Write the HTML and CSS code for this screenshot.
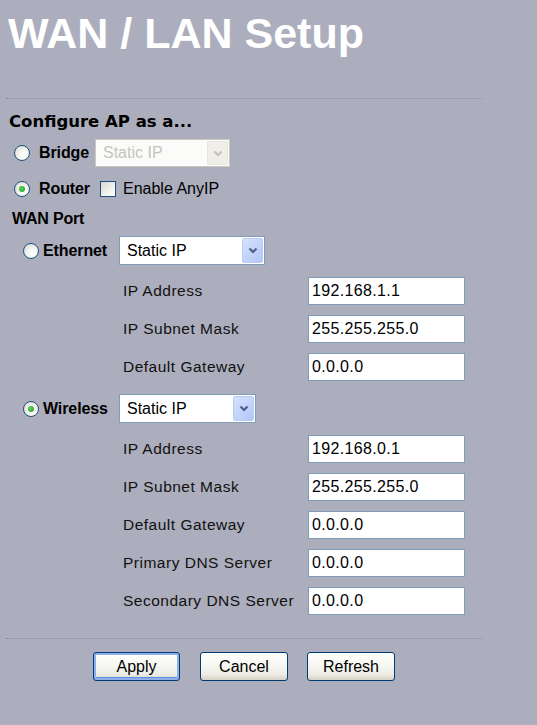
FILE: index.html
```html
<!DOCTYPE html>
<html>
<head>
<meta charset="utf-8">
<link rel="stylesheet" href="styles.css">
</head>
<body>
<h1 class="title">WAN / LAN Setup</h1>
<div class="rule rule-top"></div>
<div class="section-head">Configure AP as a...</div>

<div class="row row-bridge">
  <span class="radio"></span>
  <span class="opt-label bridge-label">Bridge</span>
  <div class="combo combo-disabled combo-bridge">
    <span class="combo-value">Static IP</span>
    <span class="combo-btn"><svg width="10" height="7" viewBox="0 0 10 7"><polyline points="1.5,1.5 5,5 8.5,1.5" fill="none" stroke="#c2c1b8" stroke-width="2.2"/></svg></span>
  </div>
</div>

<div class="row row-router">
  <span class="radio checked"></span>
  <span class="opt-label router-label">Router</span>
  <span class="checkbox"></span>
  <span class="check-text">Enable AnyIP</span>
</div>

<div class="sub-head">WAN Port</div>

<div class="row row-wan">
  <span class="radio"></span>
  <span class="opt-label wan-label">Ethernet</span>
  <div class="combo combo-eth">
    <span class="combo-value">Static IP</span>
    <span class="combo-btn"><svg width="10" height="7" viewBox="0 0 10 7"><polyline points="1.5,1.5 5,5 8.5,1.5" fill="none" stroke="#4d6185" stroke-width="2.2"/></svg></span>
  </div>
</div>

<div class="fields">
  <div class="field"><span class="field-label">IP Address</span><span class="input">192.168.1.1</span></div>
  <div class="field"><span class="field-label">IP Subnet Mask</span><span class="input">255.255.255.0</span></div>
  <div class="field"><span class="field-label">Default Gateway</span><span class="input">0.0.0.0</span></div>
</div>

<div class="row row-wan row-wireless">
  <span class="radio checked"></span>
  <span class="opt-label wan-label">Wireless</span>
  <div class="combo combo-wl">
    <span class="combo-value">Static IP</span>
    <span class="combo-btn"><svg width="10" height="7" viewBox="0 0 10 7"><polyline points="1.5,1.5 5,5 8.5,1.5" fill="none" stroke="#4d6185" stroke-width="2.2"/></svg></span>
  </div>
</div>

<div class="fields">
  <div class="field"><span class="field-label">IP Address</span><span class="input">192.168.0.1</span></div>
  <div class="field"><span class="field-label">IP Subnet Mask</span><span class="input">255.255.255.0</span></div>
  <div class="field"><span class="field-label">Default Gateway</span><span class="input">0.0.0.0</span></div>
  <div class="field"><span class="field-label">Primary DNS Server</span><span class="input">0.0.0.0</span></div>
  <div class="field"><span class="field-label">Secondary DNS Server</span><span class="input">0.0.0.0</span></div>
</div>

<div class="rule rule-bottom"></div>

<div class="buttons">
  <button class="btn btn-default">Apply</button>
  <button class="btn">Cancel</button>
  <button class="btn">Refresh</button>
</div>
</body>
</html>
```

FILE: styles.css
```css
html, body {
  margin: 0;
  padding: 0;
  background: #acaebd;
}
body {
  width: 537px;
  height: 725px;
  overflow: hidden;
  font-family: "Liberation Sans", Arial, sans-serif;
  font-size: 16px;
  color: #000;
}
.title {
  margin: 0;
  padding: 9px 0 0 8px;
  height: 48px;
  font-family: "Liberation Sans", Arial, sans-serif;
  font-weight: bold;
  font-size: 43px;
  line-height: 48px;
  color: #fff;
}
.rule {
  margin-left: 6px;
  width: 476px;
  height: 0;
  border-top: 1px dotted #8a8c99;
}
.rule-top { margin-top: 41px; }
.rule-bottom { margin-top: 23px; }

.section-head {
  margin-top: 13px;
  padding-left: 9px;
  height: 20px;
  line-height: 20px;
  font-family: "DejaVu Sans", Verdana, sans-serif;
  font-weight: bold;
  font-size: 16.5px;
}
.row {
  display: flex;
  align-items: center;
}
.row-bridge { margin-top: 7px; height: 28px; padding-left: 14px; }
.row-router { margin-top: 8px; height: 28px; padding-left: 14px; }
.row-wan { margin-top: 8px; height: 29px; padding-left: 23px; }
.row-wireless { margin-top: 13px; }

.radio {
  flex: none;
  box-sizing: border-box;
  width: 16px;
  height: 16px;
  border: 1px solid #1c5180;
  border-radius: 50%;
  background: radial-gradient(circle at 65% 65%, #ffffff 0%, #f4f4f0 40%, #d4d4cc 100%);
  display: flex;
  align-items: center;
  justify-content: center;
}
.radio.checked::after {
  content: "";
  width: 6px;
  height: 6px;
  border-radius: 50%;
  background: radial-gradient(circle at 40% 40%, #5fd05f, #1e9a1e);
}
.opt-label {
  font-weight: bold;
  font-size: 16px;
  letter-spacing: -0.1px;
}
.bridge-label { margin-left: 9px; width: 56px; }
.router-label { margin-left: 9px; width: 61px; }
.wan-label { margin-left: 4px; width: 76px; }

.checkbox {
  flex: none;
  box-sizing: border-box;
  width: 16px;
  height: 16px;
  border: 1px solid #1c5180;
  background: linear-gradient(135deg, #d8d8d2 0%, #f2f2ee 60%, #ffffff 100%);
}
.check-text { margin-left: 7px; }

.sub-head {
  margin-top: 7px;
  padding-left: 12px;
  height: 18px;
  line-height: 18px;
  font-weight: bold;
  font-size: 16px;
  letter-spacing: -0.2px;
}

.combo {
  flex: none;
  box-sizing: border-box;
  height: 29px;
  border: 1px solid #7f9db9;
  background: #fff;
  display: flex;
  align-items: center;
  padding: 1px;
}
.combo-bridge { width: 135px; height: 28px; }
.combo-eth { width: 146px; }
.combo-wl { width: 137px; }
.combo-value {
  flex: 1;
  padding-left: 6px;
  font-size: 16px;
}
.combo-btn {
  box-sizing: border-box;
  width: 21px;
  height: 100%;
  border: 1px solid #b9cbf3;
  border-radius: 2px;
  background: linear-gradient(135deg, #d6e2fd 0%, #c0d2fb 60%, #b2c7f7 100%);
  display: flex;
  align-items: center;
  justify-content: center;
}
.combo-disabled {
  border-color: #cbc8bd;
  background: #fbfbf9;
}
.combo-disabled .combo-value { color: #c5c4c0; }
.combo-disabled .combo-btn {
  border-color: #e6e5df;
  background: #efeee8;
}

.fields {
  margin-top: 12px;
  padding-left: 123px;
  display: flex;
  flex-direction: column;
  gap: 10px;
}
.field {
  display: flex;
  align-items: center;
  height: 28px;
}
.field-label {
  width: 185px;
  font-size: 15.5px;
  letter-spacing: 0.5px;
  color: #111;
}
.input {
  box-sizing: border-box;
  width: 157px;
  height: 28px;
  border: 1px solid #7f9db9;
  background: #fff;
  padding-left: 3px;
  line-height: 26px;
  font-size: 16px;
  letter-spacing: 0.35px;
}

.buttons {
  margin-top: 13px;
  padding-left: 93px;
  display: flex;
  gap: 19px;
}
.btn {
  box-sizing: border-box;
  width: 88px;
  height: 29px;
  margin: 0;
  padding: 0;
  border: 1px solid #003c74;
  border-radius: 3px;
  background: linear-gradient(180deg, #ffffff 0%, #f6f6f2 50%, #ecebe4 80%, #d6d0c5 100%);
  font-family: "Liberation Sans", Arial, sans-serif;
  font-size: 16px;
  color: #000;
}
.btn-default {
  width: 87px;
  margin-right: 1px;
  box-shadow: inset 0 0 0 2px #8fb0ec, inset 0 -1px 0 2px #5f8ee0;
}
```
